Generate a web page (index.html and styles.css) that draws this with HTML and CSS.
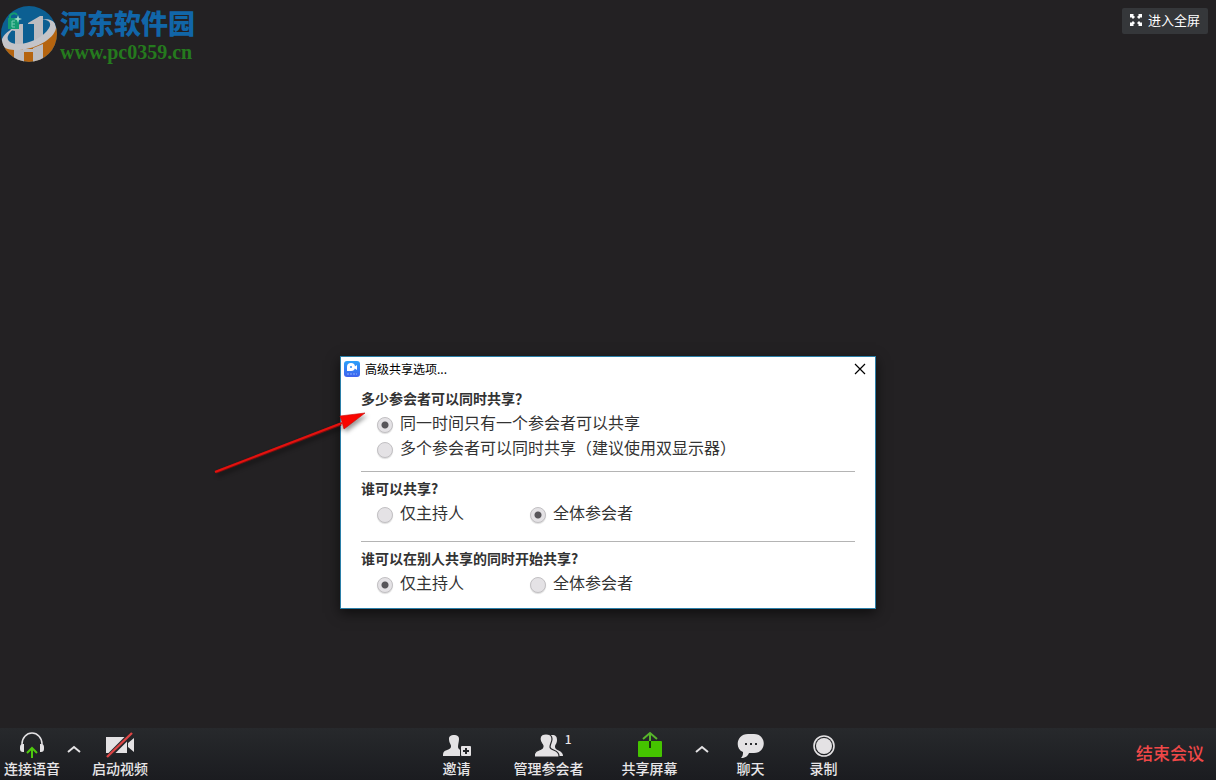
FILE: index.html
```html
<!DOCTYPE html>
<html lang="zh-CN">
<head>
    <meta charset="UTF-8">
    <meta name="viewport" content="width=device-width, initial-scale=1.0">
    <title>高级共享选项</title>
    <link rel="stylesheet" href="styles.css">
</head>
<body>
    <main class="stage">
        <a class="brand" href="#">
            <svg class="brand-logo" width="58" height="58" viewBox="0 0 58 58" aria-hidden="true">
                <defs>
                    <clipPath id="disc"><circle cx="29" cy="30" r="28"/></clipPath>
                </defs>
                <g clip-path="url(#disc)">
                    <rect width="58" height="58" fill="#0c5f92"/>
                    <path d="M0 36C12 49 38 44 58 22V58H0z" fill="#b5640f"/>
                    <path d="M10 26l10-6h3v20h-8V27zM28 19l12-7h3v22l-9 4V20h-6z" fill="#bcbcc0"/>
                    <path d="M14 46h10v12H14zM33 44l10-4v18H33zM23 45h11v3H23z" fill="#bcbcc0"/>
                    <path d="M16 23C0 30-3 42 8 45c16 5 46-7 48-21 0-8-8-10-16-8 9-1 12 3 9 8-6 11-27 19-37 15-8-3-4-10 4-16z" fill="#c4c4c8"/>
                </g>
                <path d="M8 14h11v11H8z" fill="#149b72"/>
                <path d="M10 15v-3a4 4 0 0 1 7-1" fill="none" stroke="#149b72" stroke-width="2"/>
                <path d="M15 17h-3v6h3M12 20h3" fill="none" stroke="#79c9b2"/>
                <path d="M18 11l1 3 3 1-3 1-1 3-1-3-3-1 3-1z" fill="#a5dccb"/>
            </svg>
            <span class="brand-text">
                <span class="brand-name">河东软件园</span>
                <span class="brand-url">www.pc0359.cn</span>
            </span>
        </a>

        <button class="fullscreen" type="button">
            <svg width="12" height="12" viewBox="0 0 12 12" aria-hidden="true">
                <path d="M0 0h4L3 1l2 2-2 2-2-2-1 1zM12 0v4l-1-1-2 2-2-2 2-2-1-1zM0 12V8l1 1 2-2 2 2-2 2 1 1zM12 12H8l1-1-2-2 2-2 2 2 1-1z" fill="#fff"/>
            </svg>
            进入全屏
        </button>

        <section class="dialog" role="dialog" aria-labelledby="dialogTitle">
            <header class="dialog-header">
                <svg width="16" height="16" viewBox="0 0 16 16" aria-hidden="true">
                    <defs>
                        <linearGradient id="appBlue" x2="0" y2="1">
                            <stop offset="0" stop-color="#2ba0fa"/>
                            <stop offset="1" stop-color="#3e61ee"/>
                        </linearGradient>
                    </defs>
                    <rect width="16" height="16" rx="3" fill="url(#appBlue)"/>
                    <path d="M3 10V6a4 4 0 1 1 4 4z" fill="#fff"/>
                    <path d="M10 6l3-2v5l-3-2z" fill="#fff"/>
                    <circle cx="7" cy="6" r="1" fill="#2f8ff7"/>
                    <path d="M3 13h10" stroke="#8daefb" stroke-dasharray="2 1"/>
                </svg>
                <h1 class="dialog-title" id="dialogTitle">高级共享选项...</h1>
                <button class="close" type="button" aria-label="关闭">
                    <svg width="12" height="12" viewBox="0 0 12 12">
                        <path d="M1 1l10 10M11 1L1 11" stroke="#000" stroke-width="1.2"/>
                    </svg>
                </button>
            </header>

            <form class="options">
                <fieldset class="group group-first">
                    <legend>多少参会者可以同时共享？</legend>
                    <label class="option"><input type="radio" name="count" checked>同一时间只有一个参会者可以共享</label>
                    <label class="option"><input type="radio" name="count">多个参会者可以同时共享（建议使用双显示器）</label>
                </fieldset>
                <fieldset class="group">
                    <legend>谁可以共享?</legend>
                    <div class="option-row">
                        <label class="option"><input type="radio" name="who">仅主持人</label>
                        <label class="option"><input type="radio" name="who" checked>全体参会者</label>
                    </div>
                </fieldset>
                <fieldset class="group">
                    <legend>谁可以在别人共享的同时开始共享?</legend>
                    <div class="option-row">
                        <label class="option"><input type="radio" name="start" checked>仅主持人</label>
                        <label class="option"><input type="radio" name="start">全体参会者</label>
                    </div>
                </fieldset>
            </form>

            <!-- Pointer to the first question -->
            <svg class="arrow" width="154" height="66" viewBox="0 0 154 66" aria-hidden="true">
                <path d="M2 62L127 14" stroke="#7e0d0d" stroke-width="3"/>
                <path d="M1 62L128 13" stroke="#e3120f" stroke-width="2"/>
                <path d="M151 3l-25 3 2 6 2 7z" fill="#f90500" stroke="#c80a06" stroke-width=".6"/>
            </svg>
        </section>
    </main>

    <footer class="toolbar">
        <div class="tools">
            <button class="tool" type="button">
                <svg width="28" height="28" viewBox="0 0 28 28" aria-hidden="true">
                    <path d="M4 15v-2a10 11 0 0 1 20 0v2" fill="none" stroke="#e4e2e4" stroke-width="1.5"/>
                    <path d="M6 13v8H5a3 3 0 0 1-3-3v-2a3 3 0 0 1 3-3zM22 13v8h1a3 3 0 0 0 3-3v-2a3 3 0 0 0-3-3z" fill="#e4e2e4"/>
                    <path d="M14 27v-9M9 22l5-5 5 5" fill="none" stroke="#4ec90e" stroke-width="2"/>
                </svg>
                连接语音
            </button>
            <button class="caret" type="button" aria-label="语音选项">
                <svg width="14" height="8" viewBox="0 0 14 8"><path d="M1 7l6-5 6 5" fill="none" stroke="#e4e2e4" stroke-width="2"/></svg>
            </button>
            <button class="tool tool-video" type="button">
                <svg width="28" height="28" viewBox="0 0 28 28" aria-hidden="true">
                    <path d="M0 6h21v16H0zM22 12l6-5v14l-6-5z" fill="#e4e2e4"/>
                    <path d="M2 26L26 2" stroke="#242528" stroke-width="5"/>
                    <path d="M1 26L26 2" stroke="#dd4545" stroke-width="2.4"/>
                </svg>
                启动视频
            </button>
        </div>

        <div class="tools">
            <button class="tool" type="button">
                <svg width="28" height="28" viewBox="0 0 28 28" aria-hidden="true">
                    <path d="M6 8c0-3 2-4 5-4s5 1 5 4-1 5-1 8c0 3 6 4 6 7v2H0c0-4 1-5 4-6 2-1 4-1 4-4 0-2-2-3-2-7z" fill="#e4e2e4"/>
                    <rect x="17" y="14" width="11" height="12" fill="#242528"/>
                    <rect x="18" y="15" width="10" height="10" rx="1" fill="#e4e2e4"/>
                    <path d="M23 17v6M20 20h6" stroke="#242528" stroke-width="2"/>
                </svg>
                邀请
            </button>
            <button class="tool tool-people" type="button">
                <svg width="28" height="28" viewBox="0 0 28 28" aria-hidden="true">
                    <path d="M13 4h4c4 0 5 2 5 5 0 4-2 4-2 7 0 4 8 3 8 9H14z" fill="#e4e2e4"/>
                    <path d="M5 8c0-3 2-5 6-5s6 2 6 5-2 5-2 8c0 4 9 2 9 9v1H-1v-1c0-4 2-5 5-6 2-1 4-1 4-4 0-2-3-3-3-7z" fill="#e4e2e4" stroke="#242528" stroke-width="1.2"/>
                </svg>
                管理参会者
                <span class="count">1</span>
            </button>
            <button class="tool tool-share" type="button">
                <svg width="28" height="28" viewBox="0 0 28 28" aria-hidden="true">
                    <rect x="2" y="10" width="24" height="16" rx="1" fill="#45c400"/>
                    <path d="M14 10v7" stroke="#16370b" stroke-width="2"/>
                    <path d="M14 10V2M7 8l7-6 7 6" fill="none" stroke="#57b62b" stroke-width="2"/>
                </svg>
                共享屏幕
            </button>
            <button class="caret caret-share" type="button" aria-label="共享选项">
                <svg width="14" height="8" viewBox="0 0 14 8"><path d="M1 7l6-5 6 5" fill="none" stroke="#e4e2e4" stroke-width="2"/></svg>
            </button>
            <button class="tool tool-chat" type="button">
                <svg width="28" height="28" viewBox="0 0 28 28" aria-hidden="true">
                    <path d="M11 3h6c13 0 13 19 0 19h-5c-1 3-4 5-8 5 2-2 2-4 2-6C-3 17 0 3 11 3z" fill="#e4e2e4"/>
                    <path d="M8 12h2v2H8zM13 12h2v2h-2zM18 12h2v2h-2z" fill="#2b2c2f"/>
                </svg>
                聊天
            </button>
            <button class="tool tool-record" type="button">
                <svg width="28" height="28" viewBox="0 0 28 28" aria-hidden="true">
                    <circle cx="14" cy="15" r="10" fill="none" stroke="#e4e2e4" stroke-width="1.6"/>
                    <circle cx="14" cy="15" r="8" fill="#e4e2e4"/>
                </svg>
                录制
            </button>
        </div>

        <button class="end" type="button">结束会议</button>
    </footer>
</body>
</html>
```

FILE: styles.css
```css
* {
    box-sizing: border-box;
}

body {
    margin: 0;
    min-height: 100vh;
    display: flex;
    flex-direction: column;
    background-color: #232123;
    font-family: "Noto Sans CJK SC", sans-serif;
    color: #333;
}

button {
    border: none;
    padding: 0;
    background: none;
    font-family: inherit;
    cursor: pointer;
}

svg {
    display: block;
    flex: none;
}

.stage {
    flex: 1;
    position: relative;
    display: flex;
    justify-content: space-between;
    align-items: flex-start;
}

/* Site mark in the corner */
.brand {
    display: flex;
    padding-top: 4px;
    text-decoration: none;
}

.brand-text {
    display: flex;
    flex-direction: column;
    padding-left: 2px;
}

.brand-name {
    font-size: 27px;
    line-height: 38px;
    font-weight: 900;
    color: #1166a8;
}

.brand-url {
    font-family: "Liberation Serif", serif;
    font-size: 20px;
    line-height: 20px;
    font-weight: bold;
    color: #257a1e;
}

.fullscreen {
    display: flex;
    align-items: center;
    gap: 6px;
    height: 26px;
    margin: 8px;
    padding: 0 8px 2px;
    border-radius: 2px;
    background-color: #35373a;
    font-size: 13px;
    line-height: 20px;
    color: #fff;
}

/* Sharing options window */
.dialog {
    position: absolute;
    left: 50%;
    bottom: 119px;
    width: 536px;
    margin-left: -268px;
    border: 1px solid #2b7fa8;
    background-color: #fff;
    box-shadow: 0 4px 12px rgba(0, 0, 0, 0.6);
}

.dialog-header {
    display: flex;
    align-items: center;
    gap: 5px;
    height: 24px;
    padding: 0 9px 0 3px;
}

.dialog-title {
    flex: 1;
    margin: 0;
    font-size: 12px;
    line-height: 20px;
    font-weight: normal;
    color: #000;
}

.options {
    padding: 5px 20px 0;
}

.group {
    margin: 0;
    padding: 0 0 15px;
    border: none;
    border-bottom: 1px solid #b4b4b4;
}

.group + .group {
    padding-top: 4px;
}

.group-first {
    padding-bottom: 10px;
}

.group:last-child {
    padding-bottom: 12px;
    border-bottom: none;
}

.group legend {
    float: left;
    width: 100%;
    padding: 0;
    font-size: 14px;
    line-height: 25px;
    font-weight: bold;
}

.option-row {
    display: grid;
    grid-template-columns: 153px 1fr;
    clear: both;
}

.option {
    display: flex;
    align-items: center;
    clear: both;
    gap: 7px;
    height: 25px;
    padding-left: 16px;
    font-size: 16px;
    line-height: 23px;
    padding-bottom: 2px;
}

.option input {
    appearance: none;
    width: 16px;
    height: 16px;
    margin: 4px 0 0;
    border: 1px solid #c2c0c3;
    border-radius: 50%;
    background-color: #e4e2e5;
    box-shadow: 0 1px 1px #ddd;
}

.option input:checked {
    background-image: radial-gradient(circle, #58565a 3px, transparent 4px);
}

.arrow {
    position: absolute;
    left: -127px;
    top: 53px;
    filter: drop-shadow(2px 3px 2px rgba(0, 0, 0, 0.4));
    pointer-events: none;
}

/* Meeting controls */
.toolbar {
    display: flex;
    justify-content: space-between;
    align-items: center;
    height: 52px;
    padding-right: 4px;
    background: linear-gradient(#27292c, #1b1c20);
}

.tools {
    display: flex;
    align-items: flex-start;
}

.tool {
    position: relative;
    display: flex;
    flex-direction: column;
    align-items: center;
    padding: 0 4px 1px;
    font-size: 14px;
    line-height: 18px;
    font-weight: 500;
    color: #e8e6e8;
}

.tool-video {
    margin-left: 4px;
}

.tool-people {
    margin-left: 35px;
}

.tool-share {
    margin-left: 30px;
}

.tool-chat {
    margin-left: 21px;
}

.tool-record {
    margin-left: 37px;
}

.caret {
    display: flex;
    justify-content: center;
    align-items: center;
    width: 20px;
    height: 36px;
}

.caret-share {
    margin-left: 10px;
}

.count {
    position: absolute;
    top: -1px;
    right: 16px;
    font-size: 12px;
    line-height: 18px;
}

.end {
    padding: 0 8px 2px;
    font-size: 17px;
    line-height: 26px;
    font-weight: 500;
    color: #f04848;
}
```
